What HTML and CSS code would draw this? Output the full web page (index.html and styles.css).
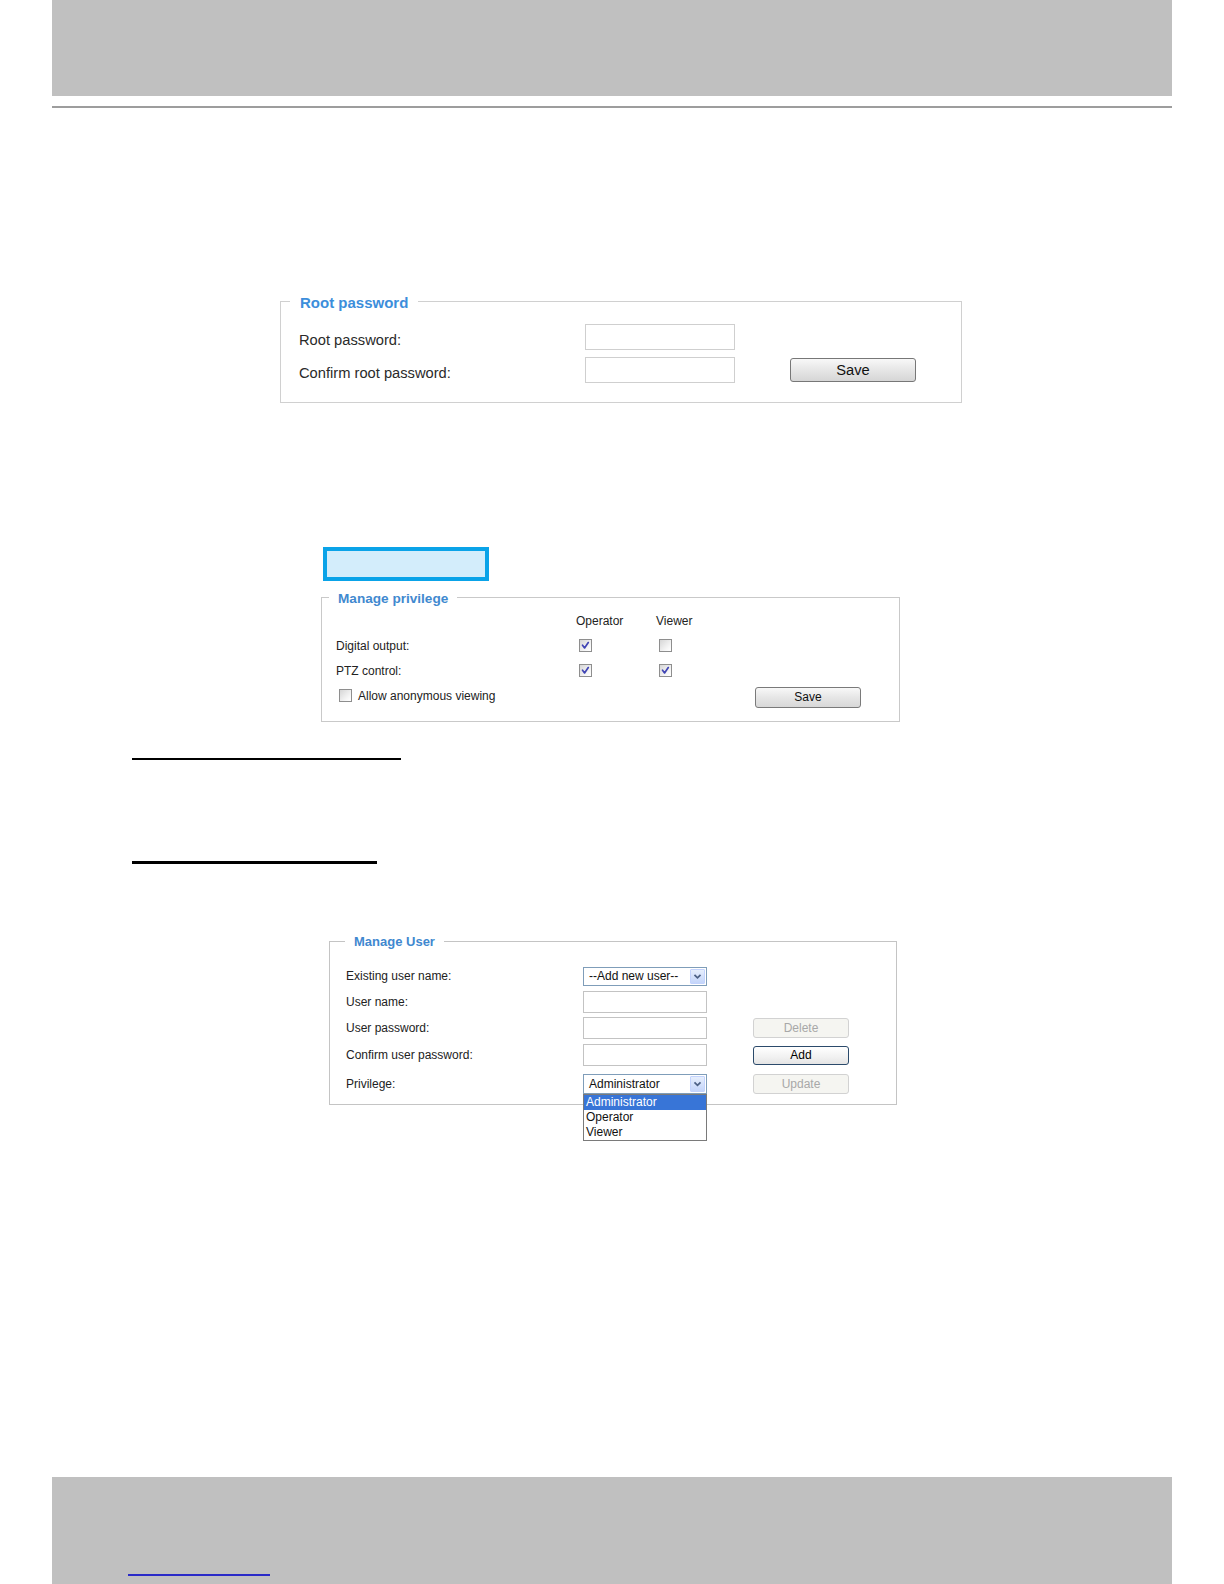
FILE: index.html
```html
<!DOCTYPE html>
<html lang="en">
<head>
<meta charset="utf-8">
<title>Security</title>
<link rel="stylesheet" href="styles.css">
</head>
<body>
<div class="page">
  <div class="header"></div>
  <div class="rule"></div>

  <fieldset class="panel root-panel">
    <legend class="legend root-legend">Root password</legend>
    <div class="root-grid">
      <label class="root-label">Root password:</label>
      <input class="text-input root-input" type="password">
      <span></span>
      <label class="root-label">Confirm root password:</label>
      <input class="text-input root-input" type="password">
      <button class="btn root-save" type="button">Save</button>
    </div>
  </fieldset>

  <div class="highlight-box"></div>

  <fieldset class="panel priv-panel">
    <legend class="legend priv-legend">Manage privilege</legend>
    <div class="priv-body">
      <div class="priv-head">
        <span></span>
        <span>Operator</span>
        <span>Viewer</span>
        <span></span>
      </div>
      <div class="priv-row">
        <span>Digital output:</span>
        <span class="cb"><svg viewBox="0 0 13 13" class="tick"><path d="M3 6.2 L5.4 9.4 L9.8 3"/></svg></span>
        <span class="cb"></span>
        <span></span>
      </div>
      <div class="priv-row">
        <span>PTZ control:</span>
        <span class="cb"><svg viewBox="0 0 13 13" class="tick"><path d="M3 6.2 L5.4 9.4 L9.8 3"/></svg></span>
        <span class="cb"><svg viewBox="0 0 13 13" class="tick"><path d="M3 6.2 L5.4 9.4 L9.8 3"/></svg></span>
        <span></span>
      </div>
      <div class="priv-row">
        <span class="allow"><span class="cb"></span><span class="allow-text">Allow anonymous viewing</span></span>
        <button class="btn priv-save" type="button">Save</button>
      </div>
    </div>
  </fieldset>

  <div class="heading-line line-one"></div>
  <div class="heading-line line-two"></div>

  <fieldset class="panel user-panel">
    <legend class="legend user-legend">Manage User</legend>
    <div class="user-grid">
      <label>Existing user name:</label>
      <div class="select sel-small">
        <span class="select-text">--Add new user--</span>
        <span class="select-arrow"><svg viewBox="0 0 15 15"><path d="M4 5.6 L7.5 9.1 L11 5.6"/></svg></span>
      </div>
      <span></span>

      <label>User name:</label>
      <input class="text-input user-input" type="text">
      <span></span>

      <label>User password:</label>
      <input class="text-input user-input" type="password">
      <button class="btn user-btn btn-disabled" type="button">Delete</button>

      <label>Confirm user password:</label>
      <input class="text-input user-input" type="password">
      <button class="btn user-btn btn-add" type="button">Add</button>

      <label>Privilege:</label>
      <div class="select-wrap">
        <div class="select sel-priv">
          <span class="select-text">Administrator</span>
          <span class="select-arrow"><svg viewBox="0 0 15 15"><path d="M4 5.6 L7.5 9.1 L11 5.6"/></svg></span>
        </div>
        <ul class="dropdown">
          <li class="opt opt-active">Administrator</li>
          <li class="opt">Operator</li>
          <li class="opt">Viewer</li>
        </ul>
      </div>
      <button class="btn user-btn btn-disabled" type="button">Update</button>
    </div>
  </fieldset>

  <div class="footer">
    <div class="footer-link"></div>
  </div>
</div>
</body>
</html>
```

FILE: styles.css
```css
html, body {
  margin: 0;
  padding: 0;
  background: #ffffff;
}

body {
  font-family: "Liberation Sans", Arial, sans-serif;
  color: #222222;
  overflow: hidden;
}

.page {
  margin-left: 52px;
  width: 1120px;
}

.header {
  height: 96px;
  background: #c0c0c0;
}

.rule {
  margin-top: 10px;
  height: 2px;
  background: #9d9d9d;
}

.panel {
  margin: 0;
  min-width: 0;
  box-sizing: border-box;
  border: 1px solid #cdcdcd;
}

.legend {
  font-weight: bold;
}

/* Root password */
.root-panel {
  margin-top: 183px;
  margin-left: 228px;
  width: 682px;
  padding: 13px 0 19px 0;
  border-color: #d0d0d0;
}

.root-legend {
  margin-left: 9px;
  padding: 4px 10px 0;
  font-size: 15px;
  line-height: 16px;
  color: #3c8edb;
}

.root-grid {
  display: grid;
  grid-template-columns: 286px 150px 181px;
  grid-auto-rows: 26px;
  row-gap: 7px;
  padding-left: 18px;
  align-items: center;
}

.root-label {
  font-size: 14.7px;
  color: #2a2a2a;
  padding-top: 5px;
}

.text-input {
  box-sizing: border-box;
  margin: 0;
  padding: 0;
  border: 1px solid #cfcfcf;
  background: #ffffff;
  outline: none;
}

.root-input {
  width: 150px;
  height: 26px;
}

.btn {
  box-sizing: border-box;
  margin: 0;
  padding: 0;
  font-family: "Liberation Sans", Arial, sans-serif;
  cursor: default;
}

.root-save {
  margin-left: 55px;
  width: 126px;
  height: 24px;
  border: 1px solid #777777;
  border-radius: 3px;
  background: linear-gradient(#f8f8f8, #e6e6e6 50%, #d6d6d6);
  font-size: 14.7px;
  color: #111;
}

/* Highlight box */
.highlight-box {
  margin-top: 144px;
  margin-left: 271px;
  width: 166px;
  height: 34px;
  box-sizing: border-box;
  border: 4px solid #0aa3e8;
  background: #d3edfb;
}

/* Manage privilege */
.priv-panel {
  margin-top: 8px;
  margin-left: 269px;
  width: 579px;
  padding: 8px 0 13px 0;
  border-color: #c9c9c9;
}

.priv-legend {
  margin-left: 7px;
  padding: 4px 9px 0;
  font-size: 13.6px;
  line-height: 12px;
  color: #4189cf;
}

.priv-body {
  padding-left: 14px;
  font-size: 12px;
  color: #222;
}

.priv-head {
  display: grid;
  grid-template-columns: 240px 80px 99px 106px;
  height: 20px;
  line-height: 16px;
}

.priv-row {
  display: grid;
  grid-template-columns: 240px 80px 99px 106px;
  height: 25px;
  align-items: center;
}

.cb {
  display: block;
  width: 13px;
  height: 13px;
  margin-left: 3px;
  box-sizing: border-box;
  border: 1px solid #8e8e8e;
  background: linear-gradient(135deg, #d6d6d6, #f6f6f6 70%, #ffffff);
}

.tick {
  display: block;
  width: 11px;
  height: 11px;
}

.tick path {
  fill: none;
  stroke: #4044b4;
  stroke-width: 2;
  stroke-linecap: round;
  stroke-linejoin: round;
}

.allow {
  grid-column: 1 / 4;
  display: flex;
  align-items: center;
}

.allow-text {
  margin-left: 6px;
}

.priv-save {
  width: 106px;
  height: 21px;
  border: 1px solid #7a7a7a;
  border-radius: 3px;
  background: linear-gradient(#f8f8f8, #e6e6e6 50%, #d8d8d8);
  font-size: 12px;
  color: #111;
  margin-top: 3px;
}

/* Heading lines */
.heading-line {
  margin-left: 80px;
  background: #000000;
}

.line-one {
  margin-top: 36px;
  width: 269px;
  height: 2px;
}

.line-two {
  margin-top: 101px;
  width: 245px;
  height: 3px;
}

/* Manage user */
.user-panel {
  margin-top: 69px;
  margin-left: 277px;
  width: 568px;
  padding: 14px 0 6px 0;
  border-color: #c4c4c4;
}

.user-legend {
  margin-left: 15px;
  padding: 2px 9px 0;
  font-size: 13px;
  line-height: 14px;
  color: #3f88cf;
}

.user-grid {
  display: grid;
  grid-template-columns: 237px 124px 142px;
  grid-template-rows: 26px 25px 27px 28px 29px;
  align-items: center;
  padding-left: 16px;
  font-size: 12px;
  color: #222;
}

.user-input {
  width: 124px;
  height: 22px;
  border-color: #c3c3c3;
}

.select {
  box-sizing: border-box;
  width: 124px;
  display: flex;
  align-items: stretch;
  padding: 1px;
  border: 1px solid #7f9db9;
  background: #ffffff;
  font-size: 12px;
  color: #111;
}

.sel-small {
  height: 19px;
}

.sel-priv {
  height: 20px;
}

.select-text {
  flex: 1;
  display: flex;
  align-items: center;
  padding-left: 4px;
}

.select-arrow {
  width: 15px;
  box-sizing: border-box;
  border: 1px solid #c3d3fd;
  background: linear-gradient(#e6eefc, #c4d5fa);
  border-radius: 1px;
}

.select-arrow svg {
  display: block;
  width: 13px;
  height: 100%;
}

.select-arrow path {
  fill: none;
  stroke: #4d6185;
  stroke-width: 2;
}

.select-wrap {
  position: relative;
  width: 124px;
}

.dropdown {
  position: absolute;
  top: 100%;
  left: 0;
  z-index: 5;
  box-sizing: border-box;
  width: 124px;
  margin: 0;
  padding: 0;
  list-style: none;
  border: 1px solid #7a7a7a;
  background: #ffffff;
}

.opt {
  height: 15px;
  line-height: 15px;
  padding-left: 2px;
  font-size: 12px;
  color: #111;
}

.opt-active {
  background: #3875d7;
  color: #ffffff;
}

.user-btn {
  margin-left: 46px;
  width: 96px;
  height: 20px;
  border-radius: 3px;
  font-size: 12px;
}

.btn-disabled {
  border: 1px solid #d2d2d2;
  background: #f5f5f1;
  color: #a8a8a8;
}

.btn-add {
  height: 19px;
  border: 1px solid #2b4a6b;
  background: linear-gradient(#ffffff, #f1f1f1 60%, #e4e4e4);
  color: #000;
}

/* Footer */
.footer {
  margin-top: 372px;
  height: 107px;
  background: #c0c0c0;
  padding-top: 97px;
  box-sizing: border-box;
}

.footer-link {
  margin-left: 76px;
  width: 142px;
  height: 2px;
  background: #2a2ac8;
}
```
